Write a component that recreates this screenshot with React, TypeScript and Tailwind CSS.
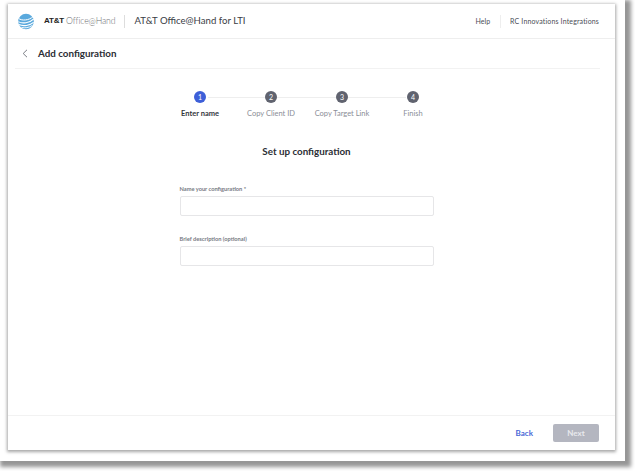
export default function App() {
  const steps = [
    { n: "1", label: "Enter name", active: true },
    { n: "2", label: "Copy Client ID", active: false },
    { n: "3", label: "Copy Target Link", active: false },
    { n: "4", label: "Finish", active: false },
  ];
  return (
    <div className="w-[635px] h-[471px] bg-white overflow-hidden font-['Lato',sans-serif]">
      <div className="w-[625px] h-[461px] bg-white pl-2 pt-1 shadow-[3px_3px_4px_3px_#969696]">
        <div className="w-[607px] h-[446px] bg-white flex flex-col shadow-[0_1px_3px_1px_rgba(0,0,0,0.35)]">
          <header className="h-[35px] shrink-0 border-b border-[#eeeeee] flex items-center pl-[10px] pr-4 text-[#33373f]">
            <svg width="16" height="17" viewBox="0 0 16 17" className="shrink-0">
              <circle cx="8" cy="8.5" r="7.8" fill="#5aa9dd" />
              <path d="M0.6 5.5 C4 8 11 7.5 15 3.6" stroke="#fff" strokeWidth="1" fill="none" />
              <path d="M0.2 8.6 C4 11 12 10 15.8 6" stroke="#fff" strokeWidth="1.1" fill="none" />
              <path d="M1 11.6 C5 13.6 12 12.6 15.6 9.4" stroke="#fff" strokeWidth="1.1" fill="none" />
              <path d="M3.5 14.4 C7 15.4 11 14.6 14 12.6" stroke="#fff" strokeWidth="0.9" fill="none" />
            </svg>
            <span className="ml-[10px] text-[8px] tracking-[-0.2px] font-['Liberation_Sans',sans-serif] font-bold text-[#222222] whitespace-nowrap">AT&amp;T</span>
            <span className="ml-[2px] text-[8.7px] tracking-[-0.1px] font-light text-[#6d6e71] whitespace-nowrap">Office@Hand</span>
            <span className="ml-[9px] w-px h-[13px] bg-[#dddddd]"></span>
            <span className="ml-[9px] text-[9.6px] text-[#3a3d45] whitespace-nowrap">AT&amp;T Office@Hand for LTI</span>
            <span className="ml-auto text-[7px] text-[#4a4d55]">Help</span>
            <span className="ml-[10px] w-px h-[13px] bg-[#eeeeee]"></span>
            <span className="ml-[9px] text-[7px] tracking-[0.15px] text-[#4a4d55] whitespace-nowrap">RC Innovations Integrations</span>
          </header>
          <div className="ml-[7px] mr-[15px] h-[30px] shrink-0 border-b border-[#f2f2f2] flex items-center">
            <svg width="6" height="9" viewBox="0 0 6 9" className="ml-[7px]">
              <path d="M5 0.8 L1.2 4.5 L5 8.2" stroke="#6b6e76" strokeWidth="0.9" fill="none" />
            </svg>
            <span className="ml-[10px] text-[9.8px] font-bold text-[#2b2e35]">Add configuration</span>
          </div>
          <main className="flex-1 pr-[17px] pl-[7px] flex flex-col items-center">
            <div className="relative grid grid-cols-[71px_71px_71px_71px] mt-[22px]">
              <div className="absolute left-[43px] right-[43px] top-[6px] h-px bg-[#eeeeee]"></div>
              {steps.map((s) => (
                <div key={s.n} className="relative flex flex-col items-center">
                  <div className={s.active ? "w-3 h-3 rounded-full bg-[#3d5fd8] text-white text-[7px] flex items-center justify-center" : "w-3 h-3 rounded-full bg-[#60636f] text-white text-[7px] flex items-center justify-center"}>
                    {s.n}
                  </div>
                  <div className={s.active ? "mt-[6px] text-[7.5px] leading-[10px] font-bold text-[#33363d] whitespace-nowrap" : "mt-[6px] text-[7.5px] leading-[10px] text-[#8b8e97] whitespace-nowrap"}>
                    {s.label}
                  </div>
                </div>
              ))}
            </div>
            <h1 className="mt-[25px] text-[9.8px] leading-[14px] font-bold text-[#2b2e35]">Set up configuration</h1>
            <div className="w-[254px] mt-[27px]">
              <label className="block text-[5.7px] leading-[8px] font-bold text-[#777a84]">Name your configuration *</label>
              <div className="mt-[3px] h-[20px] bg-white border border-[#e6e6e8] rounded-[2px]"></div>
              <label className="block mt-[19px] text-[5.7px] leading-[8px] font-bold text-[#777a84]">Brief description (optional)</label>
              <div className="mt-[3px] h-[20px] bg-white border border-[#e6e6e8] rounded-[2px]"></div>
            </div>
          </main>
          <footer className="h-[35px] shrink-0 border-t border-[#f2f2f2] flex items-center justify-end pr-4">
            <span className="text-[8px] font-bold text-[#4a67d6]">Back</span>
            <div className="ml-[20px] w-[46px] h-[18px] rounded-[2px] bg-[#b4b6c0] flex items-center justify-center text-[8px] font-bold text-[#e8e9ed]">Next</div>
          </footer>
        </div>
      </div>
    </div>
  );
}
